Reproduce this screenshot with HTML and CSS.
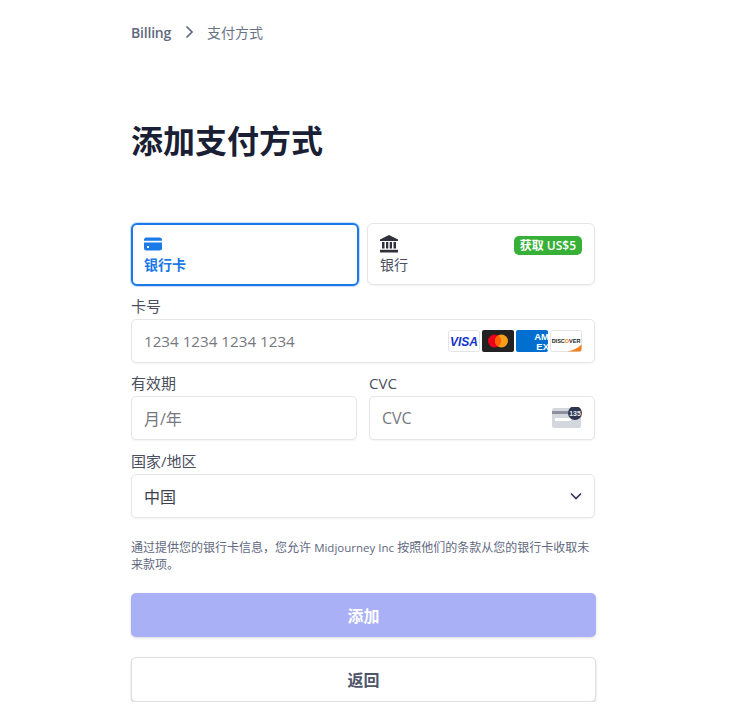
FILE: index.html
```html
<!DOCTYPE html>
<html lang="zh-CN">

<head>
    <meta charset="UTF-8">
    <meta name="viewport" content="width=device-width, initial-scale=1.0">
    <title>添加支付方式</title>
    <link rel="stylesheet" href="styles.css">
</head>

<body>
    <div class="page">
        <nav class="breadcrumb">
            <a class="crumb-link">Billing</a>
            <svg class="crumb-arrow" width="9" height="14" viewBox="0 0 9 14"><path d="M1.500 1.500 7 7l-5.500 5.500" fill="none" stroke="#5f6880" stroke-width="1.700"/></svg>
            <span class="crumb-current">支付方式</span>
        </nav>

        <h1>添加支付方式</h1>

        <div class="tabs">
            <div class="tab tab-active">
                <svg class="tab-icon" width="18" height="14" viewBox="0 0 18 14">
                    <path d="M0 3a2.500 2.500 0 0 1 2.500-2.500h13A2.500 2.500 0 0 1 18 3v.8H0z" fill="#1a7ae8"/>
                    <path d="M0 5.500h18V11a2.500 2.500 0 0 1-2.500 2.500h-13A2.500 2.500 0 0 1 0 11z" fill="#1a7ae8"/>
                    <rect x="3" y="9" width="2" height="2" fill="#fff"/>
                </svg>
                <div class="tab-label">银行卡</div>
            </div>
            <div class="tab">
                <svg class="tab-icon" width="18" height="18" viewBox="0 0 18 18">
                    <path d="M9 0 18 4.500V6H0V4.500z" fill="#30313d"/>
                    <rect x="2" y="7" width="2.500" height="6.500" fill="#30313d"/>
                    <rect x="6" y="7" width="2.300" height="6.500" fill="#30313d"/>
                    <rect x="9.700" y="7" width="2.300" height="6.500" fill="#30313d"/>
                    <rect x="13.500" y="7" width="2.500" height="6.500" fill="#30313d"/>
                    <rect x="0" y="14.800" width="18" height="2.700" fill="#30313d"/>
                </svg>
                <div class="tab-label">银行</div>
                <span class="badge">获取 US$5</span>
            </div>
        </div>

        <div class="field">
            <label>卡号</label>
            <div class="input">
                <span class="placeholder card-number">1234 1234 1234 1234</span>
                <div class="card-logos">
                    <svg class="logo" width="32" height="22" viewBox="0 0 32 22">
                        <rect x=".5" y=".5" width="31" height="21" rx="2" fill="#fff" stroke="#e3e4e8"/>
                        <text x="16" y="15.500" class="visa-text">VISA</text>
                    </svg>
                    <svg class="logo" width="32" height="22" viewBox="0 0 32 22">
                        <rect width="32" height="22" rx="2" fill="#222"/>
                        <circle cx="12.500" cy="11" r="6.500" fill="#eb001b"/>
                        <circle cx="19.500" cy="11" r="6.500" fill="#f79e1b"/>
                        <path d="M16 5.500a6.500 6.500 0 0 1 0 11a6.500 6.500 0 0 1 0-11z" fill="#ff5f00"/>
                    </svg>
                    <svg class="logo" width="32" height="22" viewBox="0 0 32 22">
                        <rect width="32" height="22" rx="2" fill="#016fd0"/>
                        <text x="33" y="10" class="amex-text">AM</text>
                        <text x="33" y="19.500" class="amex-text">EX</text>
                    </svg>
                    <svg class="logo" width="32" height="22" viewBox="0 0 32 22">
                        <rect x=".5" y=".5" width="31" height="21" rx="2" fill="#fff" stroke="#e3e4e8"/>
                        <path d="M17 21.500c6-1 11-3.500 14.500-7v5a2 2 0 0 1-2 2z" fill="#f48120"/>
                        <text x="16" y="12.500" class="discover-text">DISC<tspan fill="#f48120">O</tspan>VER</text>
                    </svg>
                </div>
            </div>
        </div>

        <div class="field-row">
            <div class="field">
                <label>有效期</label>
                <div class="input">
                    <span class="placeholder">月/年</span>
                </div>
            </div>
            <div class="field">
                <label>CVC</label>
                <div class="input">
                    <span class="placeholder">CVC</span>
                    <svg class="cvc-icon" width="30" height="22" viewBox="0 0 30 22">
                        <rect x="0" y="1" width="29" height="20" rx="2" fill="#d5d7de"/>
                        <rect x="0" y="4" width="29" height="3" fill="#8c8f9e"/>
                        <rect x="3" y="11" width="16" height="3" fill="#fff"/>
                        <circle cx="23" cy="6" r="7" fill="#30364f"/>
                        <text x="23" y="8.500" class="cvc-text">135</text>
                    </svg>
                </div>
            </div>
        </div>

        <div class="field">
            <label>国家/地区</label>
            <div class="input">
                <span class="value">中国</span>
                <svg class="select-arrow" width="12" height="8" viewBox="0 0 12 8"><path d="M1 1.500 6 6.500l5-5" fill="none" stroke="#30364f" stroke-width="1.600"/></svg>
            </div>
        </div>

        <p class="note">通过提供您的银行卡信息，您允许 <span class="note-latin">Midjourney Inc</span> 按照他们的条款从您的银行卡收取未<br>来款项。</p>

        <button class="btn btn-primary">添加</button>
        <button class="btn btn-back">返回</button>
    </div>
</body>

</html>
```

FILE: styles.css
```css
body {
    margin: 0;
    font-family: "Open Sans", "Noto Sans CJK SC", sans-serif;
    background-color: #fff;
    color: #30313d;
}

.page {
    width: 464px;
    margin-left: 131px;
    padding-top: 23px;
}

.breadcrumb {
    display: flex;
    align-items: center;
    height: 18px;
    font-size: 14px;
}

.crumb-link {
    color: #5f6880;
    font-weight: 600;
    letter-spacing: -0.2px;
}

.crumb-arrow {
    margin: 0 13px 0 14px;
}

.crumb-current {
    color: #697386;
}

h1 {
    margin: 80px 0 0;
    height: 40px;
    font-size: 32px;
    line-height: 40px;
    font-weight: 700;
    color: #1a1f36;
}

.tabs {
    display: flex;
    align-items: flex-start;
    gap: 8px;
    margin-top: 62px;
    height: 62px;
}

.tab {
    position: relative;
    flex: 1;
    height: 62px;
    box-sizing: border-box;
    padding: 11px 12px 0;
    background: #fff;
    border: 1px solid #e6e6e6;
    border-radius: 6px;
    box-shadow: 0 1px 2px rgba(0, 0, 0, 0.06);
    font-size: 14px;
    color: #4a4f5e;
}

.tab-active {
    height: 63px;
    border: 2px solid #1a7ae8;
    padding: 10px 11px 0;
    box-shadow: 0 0 0 1px rgba(26, 122, 232, 0.25);
    color: #1a7ae8;
    font-weight: 600;
}

.tab-icon {
    display: block;
    height: 18px;
}

.tab-label {
    margin-top: 3px;
    line-height: 18px;
}

.badge {
    position: absolute;
    top: 12px;
    right: 12px;
    padding: 0 6px;
    height: 19px;
    line-height: 19px;
    border-radius: 5px;
    background: #36b037;
    color: #fff;
    font-size: 12px;
    font-weight: 600;
}

.field {
    flex: 1;
    margin-top: 10.500px;
}

.field label {
    display: block;
    height: 20px;
    margin-bottom: 3px;
    font-size: 15px;
    line-height: 20px;
    color: #4a4f5e;
}

.input {
    display: flex;
    align-items: center;
    justify-content: space-between;
    height: 44px;
    box-sizing: border-box;
    padding: 0 12px;
    background: #fff;
    border: 1px solid #e6e6e6;
    border-radius: 5px;
    box-shadow: 0 1px 2px rgba(0, 0, 0, 0.05);
    font-size: 16px;
}

.placeholder {
    color: #77787f;
}

.card-number {
    font-size: 15.200px;
}

.value {
    color: #3c3f4c;
}

.card-logos {
    display: flex;
    gap: 2px;
}

.logo {
    display: block;
}

.visa-text {
    font: italic 700 12px "Liberation Sans", sans-serif;
    fill: #1434cb;
    text-anchor: middle;
}

.amex-text {
    font: 700 9.500px "Liberation Sans", sans-serif;
    fill: #fff;
    text-anchor: end;
}

.discover-text {
    font: 700 5.500px "Liberation Sans", sans-serif;
    fill: #222;
    text-anchor: middle;
}

.cvc-text {
    font: 700 7px "Liberation Sans", sans-serif;
    fill: #e8e9ee;
    text-anchor: middle;
}

.field-row {
    display: flex;
    gap: 12px;
}

.select-arrow {
    display: block;
}

.note {
    margin: 21px 0 0;
    font-size: 12px;
    line-height: 17px;
    color: #5f6880;
}

.note-latin {
    font-size: 11.500px;
}

.btn {
    display: block;
    width: 465px;
    height: 44px;
    box-sizing: border-box;
    border-radius: 5px;
    font-family: inherit;
    font-size: 16px;
    font-weight: 600;
}

.btn-primary {
    margin-top: 20px;
    border: 0;
    background: #a9b0f5;
    color: #fff;
    box-shadow: 0 1px 3px rgba(0, 0, 0, 0.15);
}

.btn-back {
    margin-top: 20px;
    height: 45px;
    background: #fff;
    color: #4f566b;
    border: 1px solid #e0e0e0;
    box-shadow: 0 1px 2px rgba(0, 0, 0, 0.2);
}
```
